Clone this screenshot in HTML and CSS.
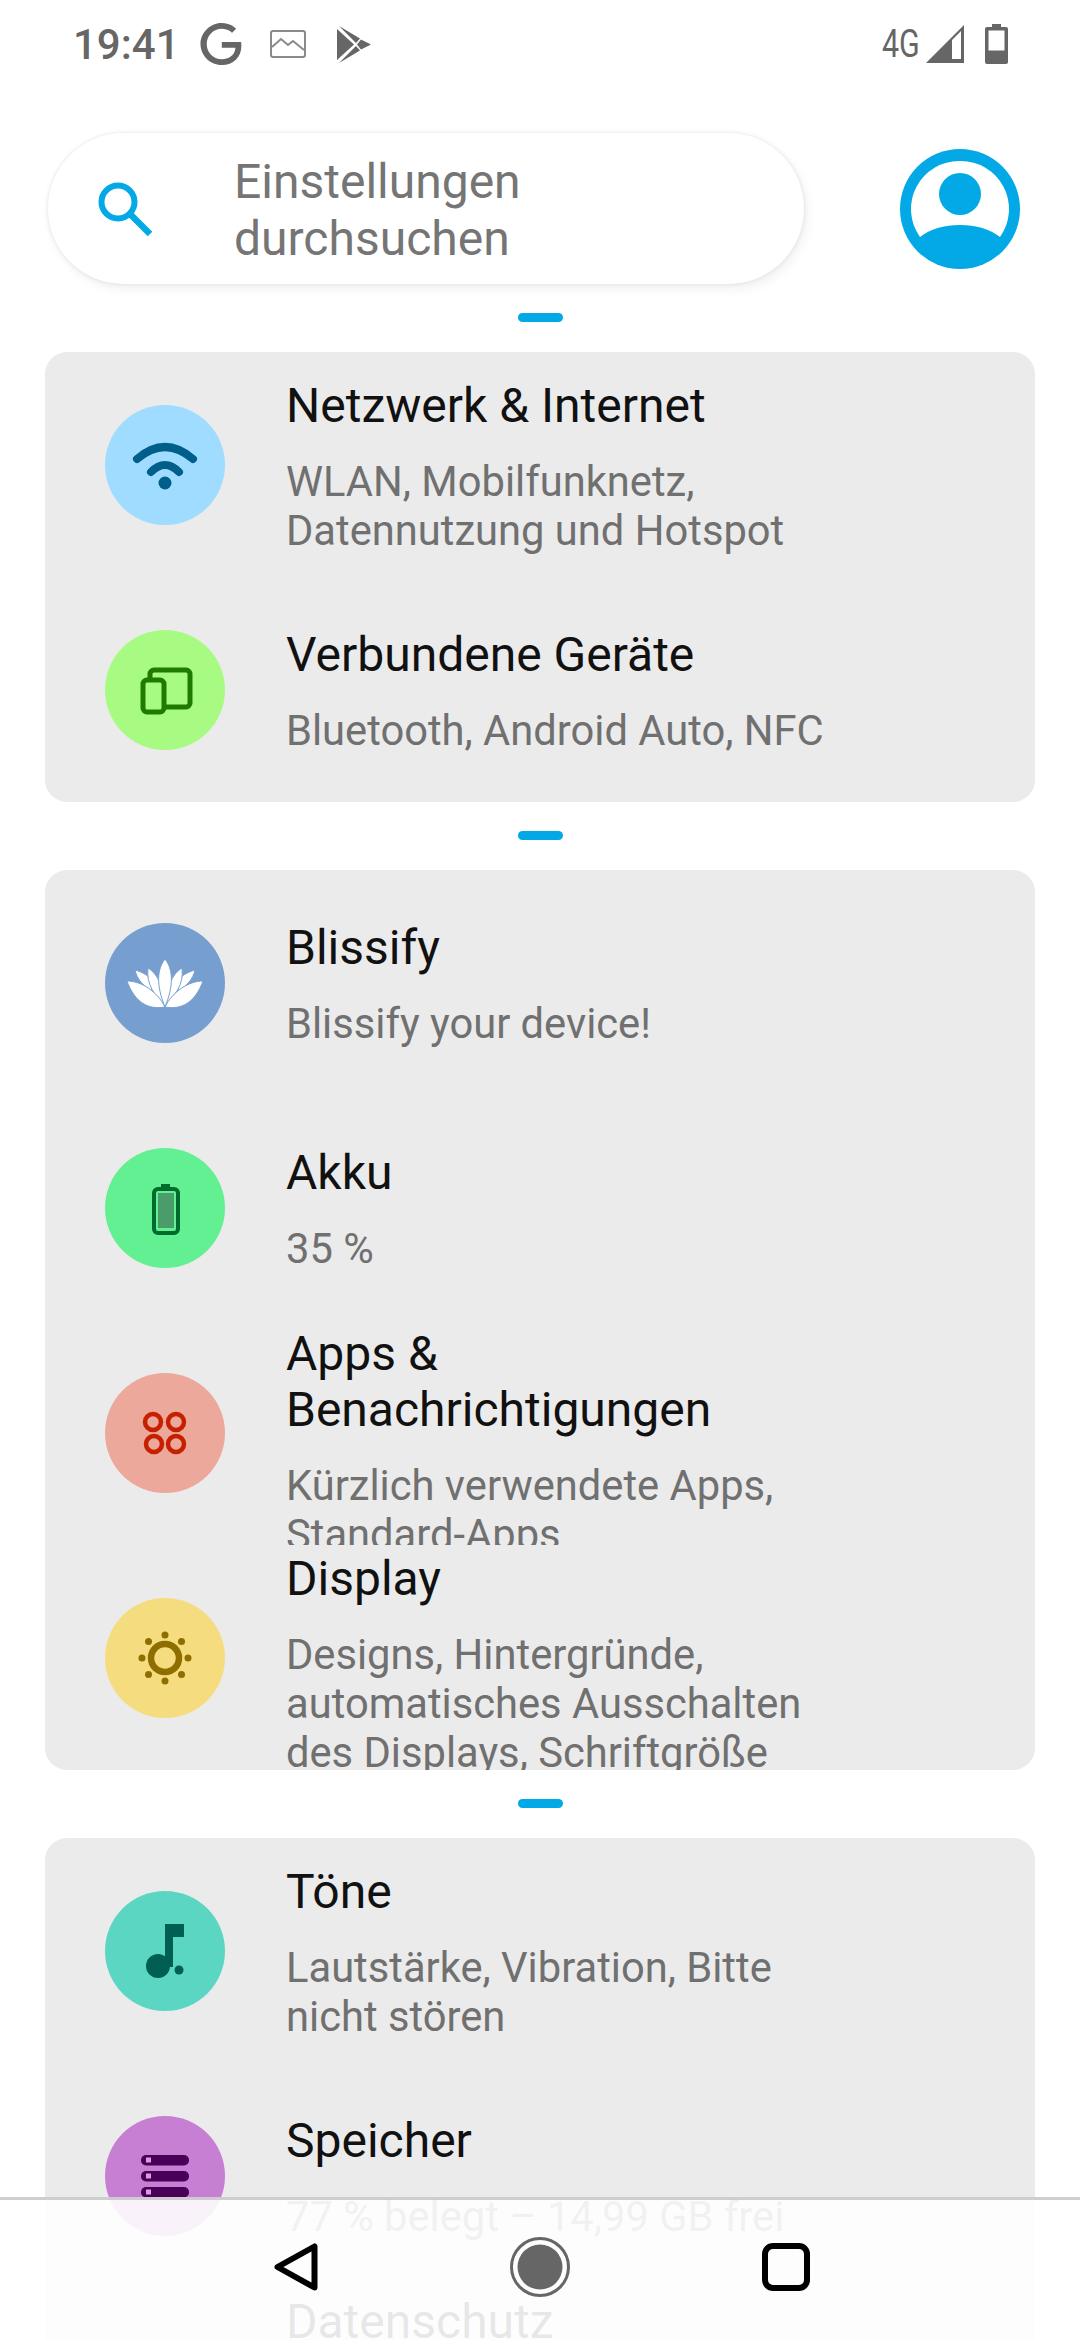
FILE: index.html

```html
<!DOCTYPE html>
<html lang="de">
<head>
  <meta charset="UTF-8">
  <title>Einstellungen</title>
  <meta name="viewport" content="width=device-width, initial-scale=1.0">
  <link rel="stylesheet" href="styles.css">
</head>
<body>
  <div class="statusbar">
    <div class="status-left">
      <span class="time">19:41</span>
      <svg class="st-g" width="42" height="42" viewBox="2 2 19.6 20"><path fill="#666" d="M21.35 11.1h-9.17v2.73h6.51c-.33 3.81-3.5 5.44-6.5 5.44C8.36 19.27 5 16.25 5 12c0-4.1 3.2-7.27 7.2-7.27 3.09 0 4.9 1.97 4.9 1.97L19 4.72S16.56 2 12.1 2C6.42 2 2.03 6.8 2.03 12c0 5.05 4.13 10 10.22 10 5.35 0 9.25-3.67 9.25-9.09 0-1.15-.15-1.81-.15-1.81z"/></svg>
      <svg class="st-img" width="36" height="28" viewBox="0 0 36 28"><rect x="1" y="1" width="34" height="26" rx="2" fill="none" stroke="#8a8a8a" stroke-width="2"/><path d="M2 17l9-8 7 6 5-4 11 9" fill="none" stroke="#8a8a8a" stroke-width="2"/></svg>
      <svg class="st-play" width="34" height="37" viewBox="0 0 34 37"><path fill="#666" d="M0 3l17 15.500L0 34zM2 0l21 12.500-4 4.500zM2 37l21-12.500-4-4.500zM24 13.500l10 5-10 5-4-5z"/></svg>
    </div>
    <div class="status-right">
      <span class="net">4G</span>
      <svg width="38" height="38" viewBox="0 0 38 38"><path fill="#666" fill-rule="evenodd" d="M38 0v38H0zM26 15v19h9V6z"/></svg>
      <svg class="st-batt" width="23" height="40" viewBox="0 0 23 40"><path fill="#666" d="M7 0h9v3h5a2 2 0 0 1 2 2v33a2 2 0 0 1-2 2H2a2 2 0 0 1-2-2V5a2 2 0 0 1 2-2h5z"/><rect x="3.500" y="6.500" width="16" height="20" fill="#fff"/></svg>
    </div>
  </div>

  <div class="header">
    <div class="search">
      <svg width="62" height="62" viewBox="0 0 62 62"><circle cx="24" cy="24" r="16.500" fill="none" stroke="#03a9e6" stroke-width="6"/><path d="M36 36l20 20" stroke="#03a9e6" stroke-width="6.500"/></svg>
      <div class="search-text">Einstellungen<br>durchsuchen</div>
    </div>
    <svg width="120" height="120" viewBox="0 0 120 120"><circle cx="60" cy="60" r="60" fill="#03a9e6"/><path fill="#fff" d="M60 12a48 48 0 0 0-40 76c10-8 24-12 40-12s30 4 40 12A48 48 0 0 0 60 12z"/><circle cx="60" cy="45" r="21" fill="#03a9e6"/></svg>
  </div>

  <section class="group">
    <div class="handle"></div>
    <div class="card">
      <div class="row">
        <svg class="ic ic-wifi" viewBox="0 0 120 120"><path d="M32 54Q60 30 88 54M46 67Q60 53 74 67" fill="none" stroke="#005f8a" stroke-width="8" stroke-linecap="round"/><circle cx="60" cy="78" r="6.500" fill="#005f8a"/></svg>
        <div class="text"><div class="title">Netzwerk &amp; Internet</div><div class="sub">WLAN, Mobilfunknetz, Datennutzung und Hotspot</div></div>
      </div>
      <div class="row">
        <svg class="ic ic-devices" viewBox="0 0 120 120"><rect x="45" y="40" width="40" height="37" rx="4" fill="none" stroke="#1f7a00" stroke-width="5"/><rect x="38" y="50" width="21" height="32" rx="4" fill="#a8fb82" stroke="#1f7a00" stroke-width="5"/></svg>
        <div class="text"><div class="title">Verbundene Geräte</div><div class="sub">Bluetooth, Android Auto, NFC</div></div>
      </div>
    </div>
  </section>

  <section class="group">
    <div class="handle"></div>
    <div class="card">
      <div class="row">
        <svg class="ic ic-lotus" viewBox="0 0 120 120">
          <g fill="#fff" stroke="#769fd0" stroke-width="1">
            <path d="M30 47C37 49 43 52 46 57L47 68C38 63 32 56 30 47Z"/>
            <path d="M43 45C51 50 58 60 60 84C50 72 41 62 43 45Z"/>
            <path d="M22 58C36 58 52 68 60 84C44 87 30 80 22 58Z"/>
            <g transform="matrix(-1 0 0 1 120 0)">
              <path d="M30 47C37 49 43 52 46 57L47 68C38 63 32 56 30 47Z"/>
              <path d="M43 45C51 50 58 60 60 84C50 72 41 62 43 45Z"/>
              <path d="M22 58C36 58 52 68 60 84C44 87 30 80 22 58Z"/>
            </g>
            <path d="M60 36C68 46 69 62 60 84C51 62 52 46 60 36Z"/>
          </g>
        </svg>
        <div class="text"><div class="title">Blissify</div><div class="sub">Blissify your device!</div></div>
      </div>
      <div class="row">
        <svg class="ic ic-batt" viewBox="0 0 120 120"><rect x="56" y="36" width="9" height="5" fill="#006b2e"/><rect x="49" y="41" width="24" height="44" rx="4" fill="none" stroke="#006b2e" stroke-width="4"/><rect x="53" y="45" width="16" height="35" fill="#4a9d6a"/></svg>
        <div class="text"><div class="title">Akku</div><div class="sub">35 %</div></div>
      </div>
      <div class="row">
        <svg class="ic ic-apps" viewBox="0 0 120 120"><g fill="none" stroke="#c62000" stroke-width="4.500"><circle cx="48" cy="49" r="8"/><circle cx="71" cy="49" r="8"/><circle cx="49" cy="71" r="8"/><circle cx="71" cy="71" r="8"/></g></svg>
        <div class="text"><div class="title">Apps &amp; Benachrichtigungen</div><div class="sub">Kürzlich verwendete Apps, Standard-Apps</div></div>
      </div>
      <div class="row">
        <svg class="ic ic-sun" viewBox="0 0 120 120"><circle cx="60" cy="60" r="14" fill="none" stroke="#8f6e00" stroke-width="6.500"/><g fill="#8f6e00"><circle cx="60" cy="37" r="3.500"/><circle cx="60" cy="83" r="3.500"/><circle cx="37" cy="60" r="3.500"/><circle cx="83" cy="60" r="3.500"/><circle cx="43.500" cy="43.500" r="3.500"/><circle cx="76.500" cy="43.500" r="3.500"/><circle cx="43.500" cy="76.500" r="3.500"/><circle cx="76.500" cy="76.500" r="3.500"/></g></svg>
        <div class="text"><div class="title">Display</div><div class="sub">Designs, Hintergründe, automatisches Ausschalten des Displays, Schriftgröße</div></div>
      </div>
    </div>
  </section>

  <section class="group">
    <div class="handle"></div>
    <div class="card">
      <div class="row">
        <svg class="ic ic-music" viewBox="0 0 120 120"><g fill="#005f52"><circle cx="53" cy="75" r="12"/><path d="M60 33h19v13H68v30h-8z"/><circle cx="74" cy="79" r="4.500"/></g></svg>
        <div class="text"><div class="title">Töne</div><div class="sub">Lautstärke, Vibration, Bitte nicht stören</div></div>
      </div>
      <div class="row">
        <svg class="ic ic-storage" viewBox="0 0 120 120"><g fill="#4a0058"><rect x="36" y="39" width="48" height="10.500" rx="5"/><rect x="36" y="55" width="48" height="10.500" rx="5"/><rect x="36" y="71" width="48" height="10.500" rx="5"/></g><g fill="#d99be2"><rect x="41" y="41.500" width="5" height="5"/><rect x="41" y="57.500" width="5" height="5"/><rect x="41" y="73.500" width="5" height="5"/></g></svg>
        <div class="text"><div class="title">Speicher</div><div class="sub">77 % belegt – 14,99 GB frei</div></div>
      </div>
      <div class="row">
        <div class="text"><div class="title">Datenschutz</div><div class="sub">Berechtigungen, Kontoaktivitäten, personenbezogene Daten</div></div>
      </div>
    </div>
  </section>

  <div class="navbar">
    <svg width="44" height="48" viewBox="0 0 44 48"><path d="M3.500 24L40.500 3.500V44.500Z" fill="none" stroke="#000" stroke-width="6" stroke-linejoin="round"/></svg>
    <svg width="60" height="60" viewBox="0 0 60 60"><circle cx="30" cy="30" r="28.500" fill="none" stroke="#666" stroke-width="3"/><circle cx="30" cy="30" r="22.500" fill="#666"/></svg>
    <svg width="48" height="48" viewBox="0 0 48 48"><rect x="3" y="3" width="42" height="42" rx="8" fill="none" stroke="#000" stroke-width="6"/></svg>
  </div>
</body>
</html>
```

FILE: styles.css

```css
html, body {
  margin: 0;
  padding: 0;
}
body {
  position: relative;
  width: 1080px;
  height: 2340px;
  overflow: hidden;
  background-color: #fff;
  font-family: Roboto, sans-serif;
}
.statusbar {
  display: flex;
  justify-content: space-between;
  align-items: center;
  height: 88px;
  padding: 0 72px 0 73px;
}
.status-left, .status-right {
  display: flex;
  align-items: center;
}
.time {
  font-size: 42px;
  font-weight: 500;
  color: #666;
  width: 127px;
}
.st-img {
  margin-left: 28px;
}
.st-play {
  margin-left: 31px;
}
.net {
  font-size: 38px;
  color: #666;
  width: 44px;
  transform: scaleX(0.8);
  transform-origin: left center;
}
.st-batt {
  margin-left: 21px;
}
.header {
  display: flex;
  justify-content: space-between;
  align-items: center;
  margin-top: 45px;
  padding: 0 60px 0 48px;
}
.search {
  display: flex;
  align-items: center;
  box-sizing: border-box;
  width: 756px;
  height: 151px;
  padding-left: 46px;
  border-radius: 76px;
  background-color: #fff;
  box-shadow: 0 0 4px rgba(0, 0, 0, 0.1), 3px 5px 12px rgba(0, 0, 0, 0.06);
}
.search-text {
  margin-left: 78px;
  margin-top: 3px;
  font-size: 48px;
  line-height: 57px;
  color: #757575;
}
.group {
  margin-top: 29px;
}
.handle {
  width: 45px;
  height: 9px;
  margin: 0 auto 30px;
  border-radius: 5px;
  background-color: #03a9e6;
}
.card {
  margin: 0 45px;
  border-radius: 22px;
  background-color: #ebebeb;
  overflow: hidden;
}
.row {
  display: flex;
  align-items: center;
  box-sizing: border-box;
  height: 225px;
  padding: 6px 0 0 60px;
  overflow: hidden;
}
.ic {
  flex: none;
  width: 120px;
  height: 120px;
  margin-top: -6px;
  margin-right: 61px;
  border-radius: 50%;
}
.ic-wifi { background-color: #a0dcff; }
.ic-devices { background-color: #a8fb82; }
.ic-lotus { background-color: #769fd0; }
.ic-batt { background-color: #63f092; }
.ic-apps { background-color: #eca89b; }
.ic-sun { background-color: #f5dc7f; }
.ic-music { background-color: #5ad6c3; }
.ic-storage { background-color: #c67fd2; }
.text {
  width: 552px;
  margin: auto 0;
  padding-bottom: 3px;
}
.row > .text:first-child {
  margin-left: 181px;
}
.title {
  font-size: 48px;
  line-height: 56px;
  color: #111;
}
.sub {
  margin-top: 23px;
  font-size: 41.7px;
  line-height: 49px;
  color: #707070;
}
.navbar {
  position: absolute;
  left: 0;
  right: 0;
  top: 2197px;
  bottom: 0;
  display: flex;
  justify-content: center;
  align-items: center;
  gap: 192px;
  box-sizing: border-box;
  padding: 0 0 6px 3px;
  border-top: 3px solid rgba(190, 190, 190, 0.75);
  background-color: rgba(255, 255, 255, 0.9);
}
```
